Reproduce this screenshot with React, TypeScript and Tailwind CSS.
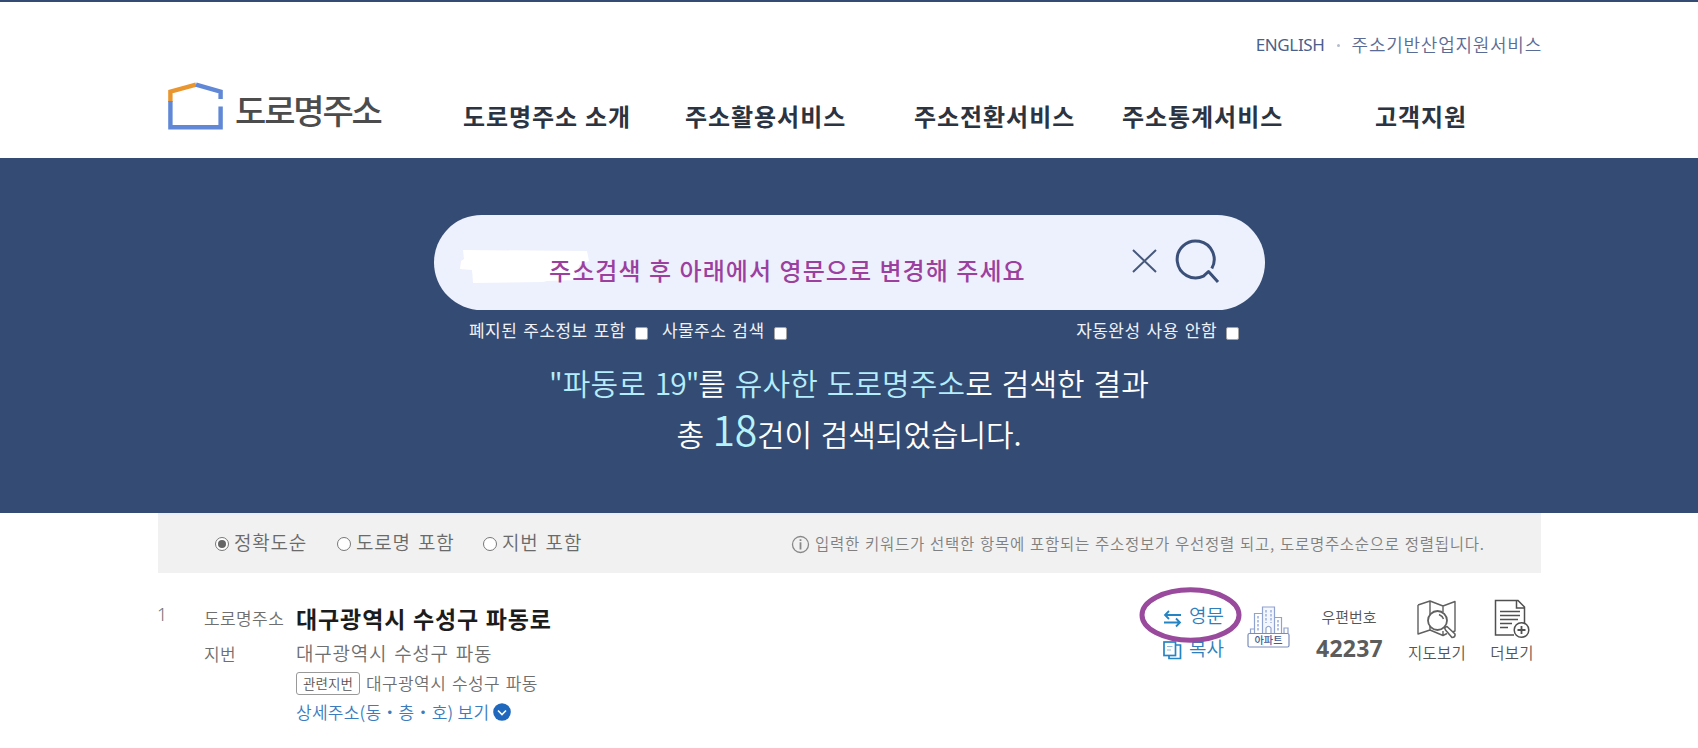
import { useState } from 'react';

interface MenuItem {
  label: string;
  width: string;
}

const menuItems: MenuItem[] = [
  { label: '도로명주소 소개', width: 'w-[222px]' },
  { label: '주소활용서비스', width: 'w-[229px]' },
  { label: '주소전환서비스', width: 'w-[208px]' },
  { label: '주소통계서비스', width: 'w-[253px]' },
  { label: '고객지원', width: 'w-[100px]' },
];

const sortOptions = [
  { id: 'accuracy', label: '정확도순', width: 'w-[122px]' },
  { id: 'road', label: '도로명 포함', width: 'w-[146px]' },
  { id: 'jibun', label: '지번 포함', width: 'w-[110px]' },
];

function Logo() {
  return (
    <svg className="w-[56px] h-[48px] shrink-0 -mt-[2px]" viewBox="0 0 56 48" fill="none" strokeWidth="4.4">
      <path d="M2.4 20V9.6L28 2.6" stroke="#e9962f" />
      <path d="M28 2.6L52.6 9.6V17" stroke="#6088d6" />
      <path d="M2.4 19V45.2H52.6V24.5" stroke="#6088d6" />
    </svg>
  );
}

function Header() {
  return (
    <header className="h-[158px] border-t-2 border-[#344b73] bg-white">
      <div className="w-[1383px] ml-[158px]">
        <div className="h-[82px] pt-[30px] flex justify-end leading-[26px] text-[#5a6c95]">
          <span className="font-['Noto_Sans',sans-serif] text-[17px] tracking-[-0.35px] text-[#4a5f8c]">ENGLISH</span>
          <span className="w-[3px] h-[3px] rounded-full bg-[#b4bccb] ml-[12px] mr-[12px] mt-[12px]"></span>
          <span className="text-[18px] font-[350] tracking-[0.75px] -mt-px -mr-px">주소기반산업지원서비스</span>
        </div>
        <div className="flex">
          <a className="flex w-[305px] pl-[10px]">
            <Logo />
            <span className="ml-[11px] mt-px text-[34px] leading-[50px] font-medium tracking-[-2.15px] text-[#4c4c4c]">도로명주소</span>
          </a>
          <nav className="flex pt-[12px] text-[24px] leading-[40px] font-bold tracking-[0.95px] [word-spacing:0.5px] text-[#2b3440]">
            {menuItems.map((item) => (
              <a key={item.label} className={`${item.width} whitespace-nowrap`}>{item.label}</a>
            ))}
          </nav>
        </div>
      </div>
    </header>
  );
}

function Check({ label }: { label: string }) {
  return (
    <label className="flex items-start whitespace-nowrap">
      {label}
      <span className="w-[13px] h-[13px] mt-[10px] ml-[9px] rounded-[2px] border border-[#a3a3a3] bg-white"></span>
    </label>
  );
}

function SearchSection() {
  return (
    <section className="h-[355px] bg-[#344b73] pt-[57px]">
      <div className="relative w-[831px] h-[95px] ml-[434px] rounded-full bg-[#edf1fd] flex">
        <svg className="absolute left-[25px] top-[34px] w-[132px] h-[35px]" viewBox="0 0 132 35" fill="#fff">
          <path d="M4 1L128 2L130 12L120 16L118 31L88 32L84 33L14 34L13 21L1 20L2 12L5 10Z" />
        </svg>
        <span className="relative ml-[115px] mt-[36px] text-[24px] leading-[38px] font-medium tracking-[1.05px] [word-spacing:1px] text-[#9c3f9e] whitespace-nowrap">
          주소검색 후 아래에서 영문으로 변경해 주세요
        </span>
        <svg className="absolute left-[698px] top-[34px] w-[25px] h-[24px]" viewBox="0 0 25 24" fill="none" stroke="#46587c" strokeWidth="2">
          <path d="M1 1L24 23M24 1L1 23" />
        </svg>
        <svg className="absolute left-[740px] top-[24px] w-[46px] h-[46px]" viewBox="0 0 46 46" fill="none" stroke="#3b5078" strokeWidth="3">
          <path d="M37.800 29.500A18.500 18.500 0 1 0 29.500 37.200L34.500 32.500L44 43" strokeLinejoin="round" />
        </svg>
      </div>
      <div className="flex ml-[469px] w-[770px] pt-[7px] h-[41px] text-[17px] leading-[26px] tracking-[0.45px] [word-spacing:1.8px] text-[#eef1f8]">
        <Check label="폐지된 주소정보 포함" />
        <div className="w-[14px]"></div>
        <Check label="사물주소 검색" />
        <div className="flex-1"></div>
        <Check label="자동완성 사용 안함" />
      </div>
      <p className="pt-[9px] text-center text-[30px] leading-[44px] font-[350] tracking-[0.1px] [word-spacing:2px] text-white">
        <span className="text-[#b4edfc]">"파동로 <span className="tracking-[-1px]">19"</span></span>를 <span className="text-[#b4edfc]">유사한 도로명주소</span>로 검색한 결과
      </p>
      <p className="mt-[4px] text-center text-[30px] leading-[50px] font-[350] tracking-[-0.05px] [word-spacing:2px] text-white">
        총 <span className="font-['Noto_Sans_CJK_KR',sans-serif] text-[41px] leading-[40px] tracking-[-0.3px] text-[#b4f3fc]">18</span>건이 검색되었습니다.
      </p>
    </section>
  );
}

function SortBar() {
  const [sort, setSort] = useState('accuracy');

  return (
    <div className="w-[1383px] h-[60px] ml-[158px] flex bg-[#f1f1f1] border-t-2 border-[#e9eff4]">
      <div className="flex pl-[57px] pt-[10px] w-[633px]">
        {sortOptions.map((option) => (
          <label
            key={option.id}
            onClick={() => setSort(option.id)}
            className={`${option.width} flex shrink-0 whitespace-nowrap text-[19px] leading-[34px] font-[350] tracking-[0.8px] [word-spacing:2px] text-[#6a6a6a]`}
          >
            <span className="w-[14px] h-[14px] mt-[12px] mr-[5px] rounded-full border border-[#777] bg-white flex items-center justify-center">
              {sort === option.id && <span className="w-[8px] h-[8px] rounded-full bg-[#666]"></span>}
            </span>
            {option.label}
          </label>
        ))}
      </div>
      <svg className="w-[19px] h-[19px] mt-[20px] shrink-0" viewBox="0 0 19 19" fill="none" stroke="#888">
        <circle cx="9.5" cy="9.5" r="8" strokeWidth="1.3" />
        <path d="M9.5 4.3V6M9.5 7.3V14.5" strokeWidth="1.8" />
      </svg>
      <p className="ml-[5px] pt-[15px] text-[15.5px] leading-[26px] font-[350] tracking-[0.7px] [word-spacing:1px] text-[#808080] whitespace-nowrap">
        입력한 키워드가 선택한 항목에 포함되는 주소정보가 우선정렬 되고, 도로명주소순으로 정렬됩니다.
      </p>
    </div>
  );
}

function ApartmentIcon() {
  return (
    <svg className="w-[43px] h-[42px]" viewBox="0 0 43 42" fill="none" stroke="#8fa2d0" strokeWidth="1.2">
      <path d="M15.5 27V1H27.5V27" fill="#f4f7fd" />
      <path d="M7.5 27V7.5H15.5M27.5 11.5H34.5V27M3.5 27V23H7.5M34.5 27V22M37 27V22H41V27" />
      <path d="M19 4V17M24 4V17M11 10V25M31 14V25" strokeDasharray="2.4 1.6" strokeWidth="2" stroke="#b3c1e4" />
      <path d="M19 27V22Q21.500 18.500 24 22V27" fill="#fff" />
      <rect x="1" y="27.500" width="41" height="13.500" rx="1.500" fill="#fff" stroke="#7b8cba" />
      <text x="7.500" y="38" fontSize="10" fontWeight="500" fill="#465b96" stroke="none" textLength="28" lengthAdjust="spacingAndGlyphs">아파트</text>
    </svg>
  );
}

function MapIcon() {
  return (
    <svg className="w-[40px] h-[39px]" viewBox="0 0 40 39" fill="none" stroke="#606060" strokeWidth="1.4" strokeLinejoin="round">
      <path d="M1 5L13 1L26 6L38 1.500V31L33 33M1 5V34L13 30L26 35.500L30 33.500M13 1V30M26 6V12M26 31V35.500" />
      <circle cx="20.500" cy="20.500" r="9.500" fill="#fff" strokeWidth="1.800" />
      <path d="M22 14.500Q25.500 16 26.500 19" />
      <path d="M27.500 27.500L30 26.500L38 34Q38.500 37.500 35 37.500L28.500 30Z" fill="#fff" strokeWidth="1.600" />
    </svg>
  );
}

function MoreIcon() {
  return (
    <svg className="w-[36px] h-[40px]" viewBox="0 0 36 40" fill="none" stroke="#505050" strokeWidth="1.500">
      <path d="M20 36H1.500V1.500H24L30.500 8V24M22.500 1.500V9H30.500" />
      <path d="M6 12.500H26M6 16.500H26M6 20.500H24M6 24.500H18M6 28.500H14" strokeWidth="1.300" />
      <circle cx="27.500" cy="31" r="7.300" fill="#fff" />
      <path d="M27.500 27V35M23.500 31H31.500" strokeWidth="1.800" />
    </svg>
  );
}

function ResultRow() {
  return (
    <div className="w-[1383px] ml-[158px] flex text-[#6f6f6f] whitespace-nowrap">
      <div className="w-[46px] pt-[28px] text-[18px] leading-[26px] font-[350] font-['Noto_Sans',sans-serif]">
        <span className="-ml-px">1</span>
      </div>
      <div className="w-[92px] pt-[32px] text-[17px] leading-[26px] font-[350] tracking-[0.4px]">
        <p>도로명주소</p>
        <p className="mt-[10px]">지번</p>
      </div>
      <div className="w-[836px] pt-[29px]">
        <p className="text-[23px] leading-[32px] font-bold tracking-[0.9px] [word-spacing:0.5px] text-[#1c1c1c]">대구광역시 수성구 파동로</p>
        <p className="mt-[5px] text-[19px] leading-[28px] font-[350] tracking-[0.75px] [word-spacing:2px]">대구광역시 수성구 파동</p>
        <div className="flex mt-[3px]">
          <span className="w-[64px] h-[23px] mt-[2px] border border-[#999] rounded-[3px] text-center text-[13.5px] leading-[21px] tracking-[0.1px] font-[350] text-[#555]">관련지번</span>
          <span className="ml-[6px] text-[17px] leading-[26px] font-[350] tracking-[0.4px] [word-spacing:1.5px]">대구광역시 수성구 파동</span>
        </div>
        <div className="flex items-center mt-[2px] text-[17px] leading-[28px] font-[350] text-[#3a7cbe]">
          <span className="tracking-[0.25px]">상세주소(동・층・호) 보기</span>
          <svg className="w-[18px] h-[18px] ml-[4px]" viewBox="0 0 18 18">
            <circle cx="9" cy="9" r="8.800" fill="#1f68bd" />
            <path d="M5 7.500L9 11.500L13 7.500" fill="none" stroke="#fff" strokeWidth="1.600" />
          </svg>
        </div>
      </div>
      <div className="relative w-[115px] pt-[27px] pl-[31px] text-[19px] font-[350] text-[#2f7fbd]">
        <div className="flex leading-[30px]">
          <svg className="w-[19px] h-[18px] mt-[10px]" viewBox="0 0 19 18" fill="none" stroke="#2584c4" strokeWidth="1.800">
            <path d="M18 5H2M6 1L2 5L6 9M1 12.500H17M13 8.500L17 12.500L13 16.500" />
          </svg>
          <span className="ml-[7px]">영문</span>
        </div>
        <div className="flex leading-[30px] mt-[3px]">
          <svg className="w-[19px] h-[19px] mt-[8px]" viewBox="0 0 19 19" fill="none" stroke="#2584c4" strokeWidth="1.700">
            <rect x="1" y="1" width="11.500" height="13.500" />
            <path d="M12.500 4H17.500V17.500H6V14.500" />
            <path d="M4 5.500H9.500M4 9H8" strokeWidth="1" stroke="#8cbbe0" />
          </svg>
          <span className="ml-[7px]">복사</span>
        </div>
        <svg className="absolute left-[7px] top-[14px] w-[104px] h-[56px]" viewBox="0 0 104 56">
          <ellipse cx="51.500" cy="28" rx="48.500" ry="25.200" fill="none" stroke="#994a9d" strokeWidth="5" />
        </svg>
      </div>
      <div className="pt-[33px]">
        <ApartmentIcon />
      </div>
      <div className="w-[118px] pt-[33px] text-center">
        <p className="text-[15px] leading-[22px] font-[350] text-[#555]">우편번호</p>
        <p className="font-['Noto_Sans',sans-serif] text-[23px] leading-[34px] font-bold tracking-[0.2px] text-[#5c5c5c] mt-[3px] pl-px">42237</p>
      </div>
      <div className="w-[60px] ml-[-1px] pt-[27px] flex flex-col items-center">
        <MapIcon />
        <p className="mt-px text-[15.5px] leading-[24px] font-[350] tracking-[0.3px] text-[#555]">지도보기</p>
      </div>
      <div className="w-[50px] ml-[20px] pt-[26px] flex flex-col items-center">
        <MoreIcon />
        <p className="mt-px text-[15.5px] leading-[24px] font-[350] tracking-[0.3px] text-[#555]">더보기</p>
      </div>
    </div>
  );
}

export default function App() {
  return (
    <div className="w-[1698px] h-[748px] overflow-hidden bg-white font-['Noto_Sans_CJK_KR',sans-serif]">
      <Header />
      <SearchSection />
      <SortBar />
      <ResultRow />
    </div>
  );
}
